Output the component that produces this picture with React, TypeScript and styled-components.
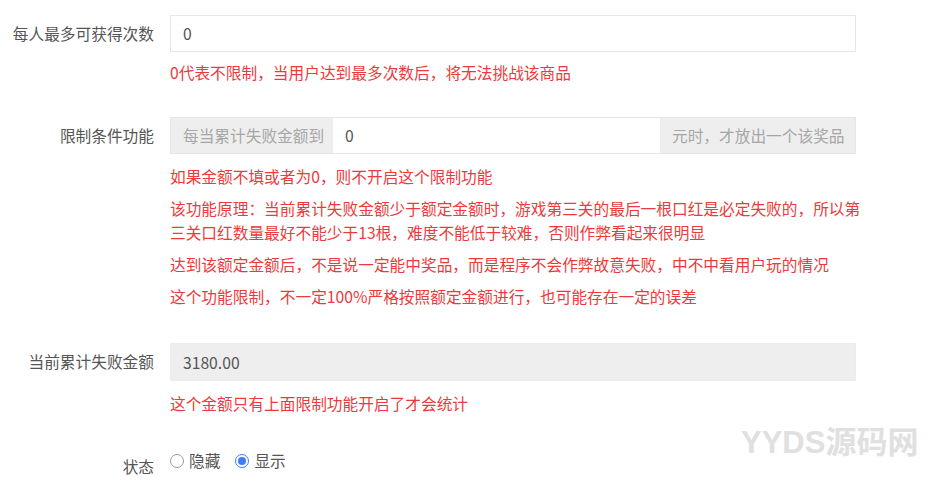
import React from "react";
import styled, { createGlobalStyle } from "styled-components";

const Global = createGlobalStyle`
  html, body { margin: 0; padding: 0; background: #fff; }
  body {
    font-family: "Noto Sans CJK SC", "Noto Sans", "Liberation Sans", sans-serif;
    font-size: 15.7px;
    color: #555;
  }
  * { box-sizing: border-box; }
`;

const Page = styled.div`
  position: relative;
  width: 928px;
  height: 504px;
  padding-top: 15px;
  overflow: hidden;
`;

const Item = styled.div<{ $gap?: number }>`
  display: flex;
  align-items: flex-start;
  margin-bottom: ${(p) => p.$gap ?? 32}px;
`;

const Label = styled.div`
  width: 154px;
  flex: none;
  text-align: right;
  color: #555;
  line-height: 37px;
  white-space: nowrap;
`;

const Control = styled.div`
  margin-left: 16px;
  width: 686px;
`;

const Input = styled.input<{ $readOnly?: boolean }>`
  display: block;
  width: 100%;
  height: ${(p) => (p.$readOnly ? 38 : 37)}px;
  padding: 0 12px;
  border: 1px solid ${(p) => (p.$readOnly ? "#ececec" : "#e6e6e6")};
  background: ${(p) => (p.$readOnly ? "#eeeeee" : "#fff")};
  color: #555;
  font: inherit;
  outline: none;
`;

const Group = styled.div`
  display: flex;
  height: 37px;
  border: 1px solid #e6e6e6;
`;

const Addon = styled.span<{ $w: number }>`
  flex: none;
  width: ${(p) => p.$w}px;
  display: flex;
  align-items: center;
  padding: 0 12px;
  background: #eeeeee;
  color: #a6a6a6;
  white-space: nowrap;
`;

const GroupInput = styled.input`
  flex: 1;
  min-width: 0;
  border: none;
  padding: 0 12px;
  font: inherit;
  color: #555;
  background: #fff;
  outline: none;
`;

const HelpList = styled.div<{ $top?: number }>`
  margin-top: ${(p) => p.$top ?? 11}px;
  display: flex;
  flex-direction: column;
  gap: 8px;
`;

const Help = styled.p`
  margin: 0;
  color: #ec3a3c;
  line-height: 24px;
`;

const HelpLine = styled.span`
  display: block;
  white-space: nowrap;
`;

const RadioRow = styled.div`
  display: flex;
  align-items: center;
  height: 24px;
  gap: 15px;
  margin-top: 1px;
`;

const RadioLabel = styled.label`
  display: flex;
  align-items: center;
  gap: 5px;
  color: #555;
  cursor: pointer;
  line-height: 24px;
`;

const Circle = styled.span<{ $on?: boolean }>`
  width: 14px;
  height: 14px;
  border-radius: 50%;
  border: 1px solid ${(p) => (p.$on ? "#3d7ef5" : "#9a9a9a")};
  background: #fff;
  display: flex;
  align-items: center;
  justify-content: center;
  &::after {
    content: "";
    width: 8px;
    height: 8px;
    border-radius: 50%;
    background: ${(p) => (p.$on ? "#3d7ef5" : "transparent")};
  }
`;

const Watermark = styled.div`
  position: absolute;
  left: 741px;
  top: 427px;
  font-family: "Liberation Sans", "Noto Sans CJK SC", sans-serif;
  font-weight: 700;
  font-size: 31px;
  line-height: 1;
  color: #e0e0e0;
  pointer-events: none;
  white-space: nowrap;
`;

export default function App() {
  const [status, setStatus] = React.useState("show");
  return (
    <Page>
      <Global />
      <Item>
        <Label>每人最多可获得次数</Label>
        <Control>
          <Input defaultValue="0" />
          <HelpList $top={9}>
            <Help>0代表不限制，当用户达到最多次数后，将无法挑战该商品</Help>
          </HelpList>
        </Control>
      </Item>
      <Item $gap={34}>
        <Label>限制条件功能</Label>
        <Control>
          <Group>
            <Addon $w={162}>每当累计失败金额到</Addon>
            <GroupInput defaultValue="0" />
            <Addon $w={195}>元时，才放出一个该奖品</Addon>
          </Group>
          <HelpList>
            <Help>如果金额不填或者为0，则不开启这个限制功能</Help>
            <Help>
              <HelpLine>该功能原理：当前累计失败金额少于额定金额时，游戏第三关的最后一根口红是必定失败的，所以第</HelpLine>
              <HelpLine>三关口红数量最好不能少于13根，难度不能低于较难，否则作弊看起来很明显</HelpLine>
            </Help>
            <Help>达到该额定金额后，不是说一定能中奖品，而是程序不会作弊故意失败，中不中看用户玩的情况</Help>
            <Help>这个功能限制，不一定100%严格按照额定金额进行，也可能存在一定的误差</Help>
          </HelpList>
        </Control>
      </Item>
      <Item>
        <Label>当前累计失败金额</Label>
        <Control>
          <Input $readOnly readOnly value="3180.00" />
          <HelpList>
            <Help>这个金额只有上面限制功能开启了才会统计</Help>
          </HelpList>
        </Control>
      </Item>
      <Item>
        <Label>状态</Label>
        <Control>
          <RadioRow>
            <RadioLabel onClick={() => setStatus("hide")}>
              <Circle $on={status === "hide"} />
              隐藏
            </RadioLabel>
            <RadioLabel onClick={() => setStatus("show")}>
              <Circle $on={status === "show"} />
              显示
            </RadioLabel>
          </RadioRow>
        </Control>
      </Item>
      <Watermark>YYDS源码网</Watermark>
    </Page>
  );
}
